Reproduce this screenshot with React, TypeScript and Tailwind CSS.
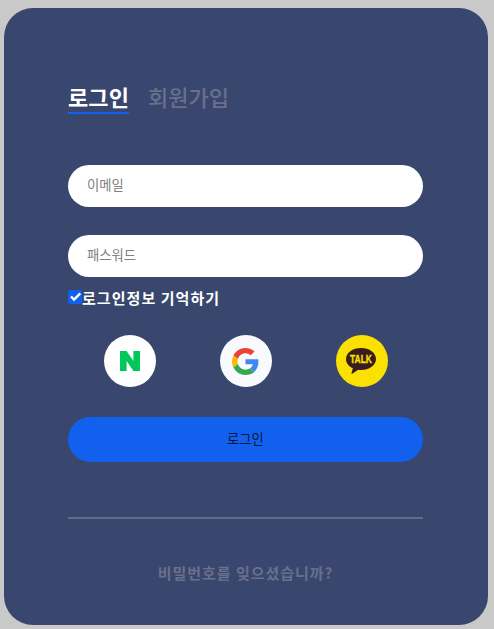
import { useState } from "react"


const NaverIcon = () => (
    <svg viewBox="0 0 20 20" className="w-5 h-5" fill="#03c75a">
        <path d="M0 0H6.6L13.4 9.9V0H20V20H13.4L6.6 10.1V20H0Z" />
    </svg>
)

const GoogleIcon = () => (
    <svg viewBox="0 0 48 48" className="w-[27px] h-[27px] mt-px mr-px">
        <path fill="#EA4335" d="M24 9.5c3.54 0 6.71 1.22 9.21 3.6l6.85-6.85C35.9 2.38 30.47 0 24 0 14.62 0 6.51 5.38 2.56 13.22l7.98 6.19C12.43 13.72 17.74 9.5 24 9.5z" />
        <path fill="#4285F4" d="M46.98 24.55c0-1.57-.15-3.09-.38-4.55H24v9.02h12.94c-.58 2.96-2.26 5.48-4.78 7.18l7.73 6c4.51-4.18 7.09-10.36 7.09-17.65z" />
        <path fill="#FBBC05" d="M10.53 28.59c-.48-1.45-.76-2.99-.76-4.59s.27-3.14.76-4.59l-7.98-6.19C.92 16.46 0 20.12 0 24c0 3.88.92 7.54 2.56 10.78l7.97-6.19z" />
        <path fill="#34A853" d="M24 48c6.48 0 11.93-2.13 15.89-5.81l-7.73-6c-2.15 1.45-4.92 2.3-8.16 2.3-6.26 0-11.57-4.22-13.47-9.91l-7.98 6.19C6.51 42.62 14.62 48 24 48z" />
    </svg>
)

const KakaoIcon = () => (
    <svg viewBox="0 0 30 26" className="w-[30px] h-[26px] mt-px mr-px">
        <path fill="#3b1c1e" d="M15 0C6.7 0 0 4.9 0 11c0 4 2.7 7.4 6.8 9.3L5.5 25.3c-.1.5.3.8.7.5L12.3 21.8c.9.1 1.8.2 2.7.2 8.3 0 15-4.9 15-11S23.3 0 15 0z" />
        <text x="15" y="14.5" textAnchor="middle" textLength="22" lengthAdjust="spacingAndGlyphs" fill="#fae100" stroke="#fae100" strokeWidth="0.3" className="font-['Liberation_Sans',sans-serif] text-[10px] font-bold">TALK</text>
    </svg>
)


export default function App(){
    const [remember, setRemember] = useState(true);

    return (
        <main className="w-full h-[629px] bg-[#c9c9c9] pt-[7.5px] pl-[3.5px] overflow-hidden font-['Noto_Sans_CJK_KR',sans-serif]">
            <section className="w-[484px] h-[617px] rounded-[29px] bg-[#39476f] px-16 pt-[76px] flex flex-col">

                {/* Tabs */}
                <div className="flex gap-[19px] text-[22px] leading-6 font-medium">
                    <button className="h-[30px] ml-[0.5px] pb-1 text-white font-bold tracking-[0.1px] border-b-2 border-[#1161ee]">로그인</button>
                    <button className="h-[30px] pb-1 border-b-2 border-transparent text-[#6a6f8c]">회원가입</button>
                </div>

                <form className="flex flex-col" onSubmit={(e) => e.preventDefault()}>
                    <input
                        type="email"
                        placeholder="이메일"
                        className="mt-[51px] h-[42px] w-[355px] ml-[0.5px] rounded-full bg-white px-[19px] pb-[3px] text-[13.33px] text-black placeholder:text-[#808080] outline-none"
                    />
                    <input
                        type="password"
                        placeholder="패스워드"
                        className="mt-7 h-[42px] w-[355px] ml-[0.5px] rounded-full bg-white px-[19px] pb-[3px] text-[13.33px] text-black placeholder:text-[#808080] outline-none"
                    />

                    <label className="mt-[9px] ml-[0.5px] h-6 flex items-center text-[15px] leading-6 tracking-[1.05px] font-bold text-white">
                        <input type="checkbox" className="sr-only" checked={remember} onChange={() => setRemember(!remember)} />
                        <span className="w-[14px] h-[14px] mt-[-1px] rounded-[2px] bg-[#1161ee] flex items-center justify-center">
                            {remember && (
                                <svg viewBox="0 0 14 14" className="w-[14px] h-[14px]" fill="none" stroke="white" strokeWidth="2.4">
                                    <path d="M3 6.5L6 9.5L12.3 3.4" />
                                </svg>
                            )}
                        </span>
                        로그인정보 기억하기
                    </label>

                    {/* Social login */}
                    <div className="mt-[25px] ml-9 flex gap-16">
                        <button type="button" aria-label="Naver" className="w-[52px] h-[52px] rounded-full bg-white flex items-center justify-center">
                            <NaverIcon />
                        </button>
                        <button type="button" aria-label="Google" className="w-[52px] h-[52px] rounded-full bg-[#f8fafd] flex items-center justify-center">
                            <GoogleIcon />
                        </button>
                        <button type="button" aria-label="Kakao" className="w-[52px] h-[52px] rounded-full bg-[#fae100] flex items-center justify-center">
                            <KakaoIcon />
                        </button>
                    </div>

                    <button type="submit" className="mt-[30px] ml-[0.5px] h-[45px] w-[355px] rounded-full bg-[#1161ee] pb-px text-[13.33px] text-[#06183b]">
                        로그인
                    </button>
                </form>

                <hr className="mt-[55px] ml-[0.5px] w-[355px] border-0 h-[2px] bg-[#5f6c8f]" />

                <a href="#" className="mt-[42px] text-center text-[15px] leading-6 tracking-[0.95px] font-bold text-[#6a6f8c]">비밀번호를 잊으셨습니까?</a>
            </section>
        </main>
    )
}
